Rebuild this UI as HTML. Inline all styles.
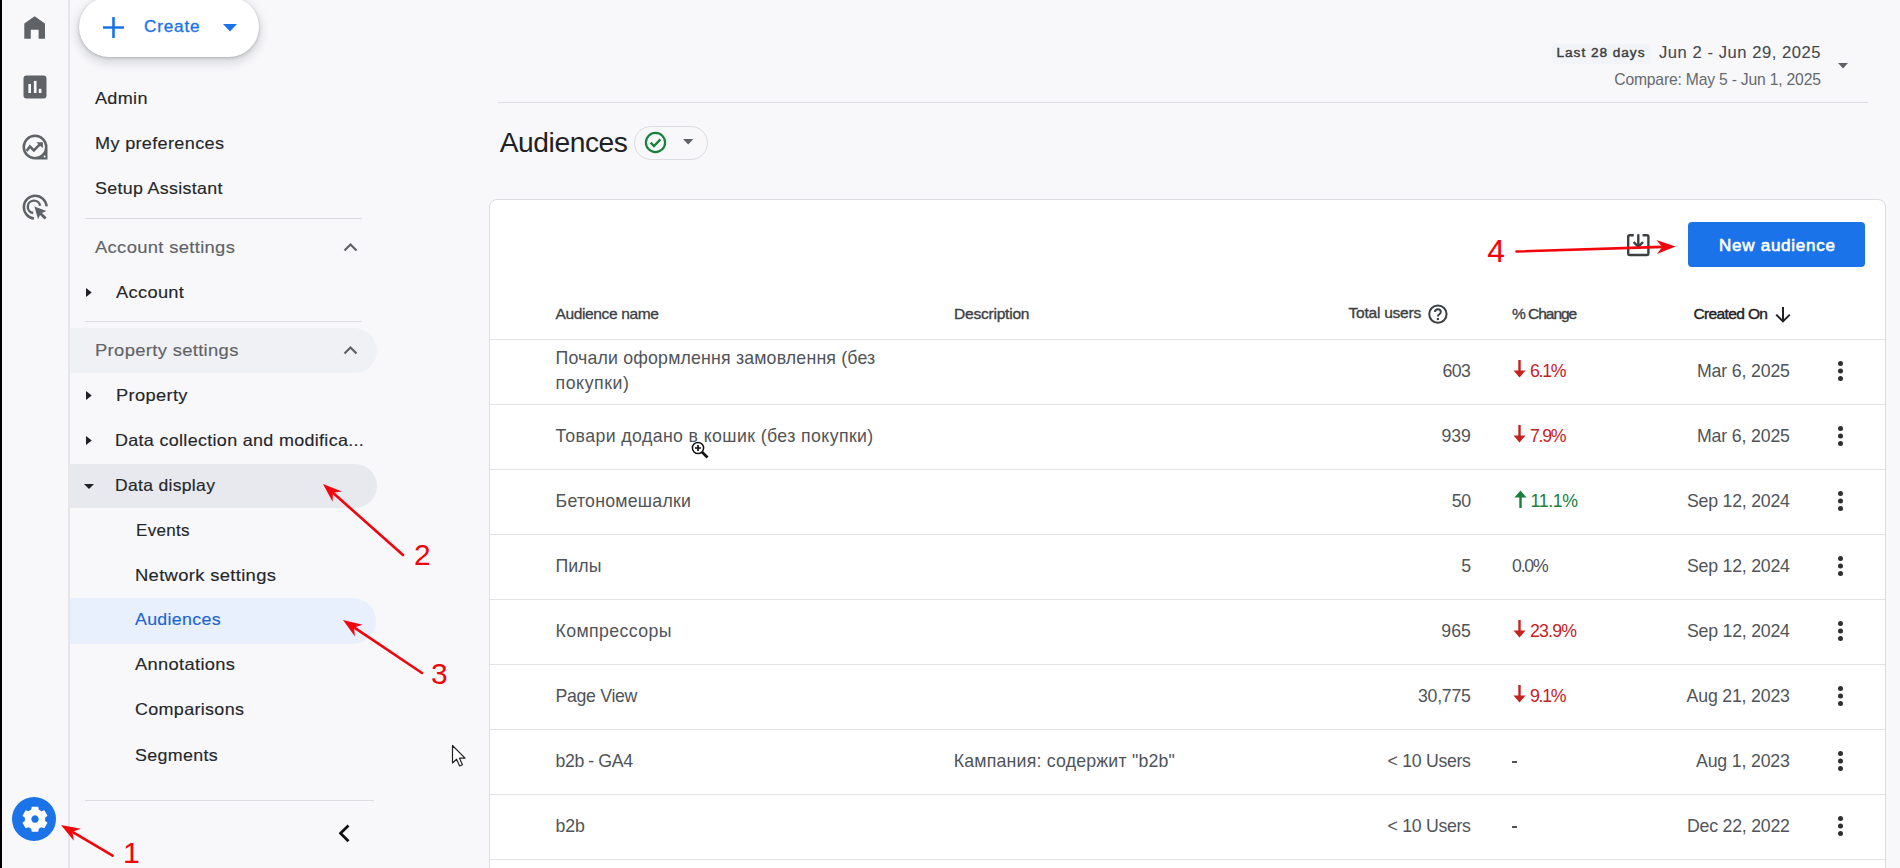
<!DOCTYPE html><html><head><meta charset="utf-8"><title>Audiences</title><style>
*{box-sizing:border-box}
html,body{margin:0;padding:0;width:1900px;height:868px;overflow:hidden;background:#f8f8fb;font-family:"Liberation Sans",sans-serif}
.t{position:absolute;white-space:nowrap}
.a{position:absolute}
.med{-webkit-text-stroke:0.35px currentColor}
</style></head><body>
<div class="a" style="left:0;top:0;width:2px;height:868px;background:#000"></div>
<div class="a" style="left:68px;top:0;width:1.5px;height:868px;background:#e5e5ea"></div>
<svg class="a" style="left:23px;top:15px" width="24" height="26" viewBox="0 0 24 26">
<path d="M11.65 1.3 L22 8.6 V23.7 H15.6 V14.7 H7.8 V23.7 H1.3 V8.6 Z" fill="#5f6368"/></svg>
<svg class="a" style="left:23px;top:75px" width="24" height="24" viewBox="0 0 24 24">
<rect x="0.5" y="0.5" width="23" height="23" rx="3" fill="#5f6368"/>
<rect x="5.4" y="9" width="2.6" height="9" fill="#fff"/>
<rect x="10.9" y="5.9" width="2.6" height="12.1" fill="#fff"/>
<rect x="15.8" y="13.8" width="2.6" height="4.2" fill="#fff"/></svg>
<svg class="a" style="left:22px;top:134px" width="26" height="26" viewBox="0 0 26 26">
<path fill-rule="evenodd" d="M25.5 13 A12.5 12.5 0 1 0 13 25.5 H25.5 Z M23 13 A10 10 0 1 0 3 13 A10 10 0 1 0 23 13 Z" fill="#5f6368"/>
<path d="M4.6 16.9 L7.9 12.5 L11.9 16.4 L17.8 10.4" fill="none" stroke="#5f6368" stroke-width="2.5" stroke-linejoin="miter"/>
<path d="M14.4 8.2 H20.9 V14.3 Z" fill="#5f6368"/>
<circle cx="22.6" cy="22.6" r="1" fill="#f8f8fb"/></svg>
<svg class="a" style="left:22px;top:194px" width="27" height="27" viewBox="0 0 27 27">
<path d="M12 24.5 A11.4 11.4 0 1 1 24.6 12.4" fill="none" stroke="#5f6368" stroke-width="2.5"/>
<path d="M11.2 19 A6.2 6.2 0 1 1 18.1 11.8" fill="none" stroke="#5f6368" stroke-width="2.4"/>
<path d="M12.4 12.4 L24.4 17 L20 18.9 L24.6 23.5 L22.6 25.5 L18 20.9 L16.1 25.3 Z" fill="#5f6368"/></svg>
<svg class="a" style="left:12px;top:797px" width="44" height="44" viewBox="0 0 44 44">
<circle cx="22" cy="22" r="22" fill="#1a73e8"/>
<g transform="translate(23 21.6) scale(0.95)">
<path fill="#fff" fill-rule="evenodd" d="M-3.4 -12.5 H3.4 L4 -9.2 A9.4 9.4 0 0 1 6.6 -7.7 L9.8 -8.8 L13.2 -3 L10.6 -0.8 A9.4 9.4 0 0 1 10.6 2.2 L13.2 4.4 L9.8 10.2 L6.6 9.1 A9.4 9.4 0 0 1 4 10.6 L3.4 13.9 H-3.4 L-4 10.6 A9.4 9.4 0 0 1 -6.6 9.1 L-9.8 10.2 L-13.2 4.4 L-10.6 2.2 A9.4 9.4 0 0 1 -10.6 -0.8 L-13.2 -3 L-9.8 -8.8 L-6.6 -7.7 A9.4 9.4 0 0 1 -4 -9.2 Z M0 -3.4 A3.9 3.9 0 1 0 0.001 -3.4 Z"/>
</g></svg>
<div class="a" style="left:78.5px;top:-3px;width:180px;height:59.5px;border-radius:30px;background:#fff;box-shadow:0 1px 3px rgba(60,64,67,.3),0 4px 8px 3px rgba(60,64,67,.15)"></div>
<svg class="a" style="left:103px;top:16.5px" width="21" height="21" viewBox="0 0 21 21"><path d="M10.5 0 V21 M0 10.5 H21" stroke="#1a73e8" stroke-width="2.6"/></svg>
<div class="t" style="left:144.00px;top:17.68px;font-size:17.15px;line-height:17.15px;letter-spacing:0.809px;color:#1a73e8;-webkit-text-stroke:0.35px currentColor;">Create</div>
<svg class="a" style="left:223px;top:23.5px" width="14" height="8" viewBox="0 0 14 8"><path d="M0 0 H14 L7 7.5 Z" fill="#1a73e8"/></svg>
<div class="a" style="left:70px;top:328px;width:307px;height:45px;border-radius:0 23px 23px 0;background:#f0f1f4"></div>
<div class="a" style="left:70px;top:464px;width:307px;height:44px;border-radius:0 22px 22px 0;background:#e8e9ee"></div>
<div class="a" style="left:70px;top:598px;width:306px;height:45.5px;border-radius:0 23px 23px 0;background:#e8f0fe"></div>
<div class="a" style="left:85px;top:217.5px;width:277px;height:1.5px;background:#dcdde2"></div>
<div class="a" style="left:85px;top:320.5px;width:277px;height:1.5px;background:#dcdde2"></div>
<div class="a" style="left:85px;top:799.5px;width:289px;height:1.5px;background:#dcdde2"></div>
<div class="t" style="left:95.00px;transform:scaleX(1.0805);transform-origin:0 0;top:90.75px;font-size:16.72px;line-height:16.72px;letter-spacing:0.300px;color:#25272a;-webkit-text-stroke:0.15px currentColor;">Admin</div>
<div class="t" style="left:95.00px;transform:scaleX(1.0834);transform-origin:0 0;top:135.85px;font-size:16.72px;line-height:16.72px;letter-spacing:0.300px;color:#25272a;-webkit-text-stroke:0.15px currentColor;">My preferences</div>
<div class="t" style="left:95.00px;transform:scaleX(1.0674);transform-origin:0 0;top:180.65px;font-size:16.72px;line-height:16.72px;letter-spacing:0.300px;color:#25272a;-webkit-text-stroke:0.15px currentColor;">Setup Assistant</div>
<div class="t" style="left:95.00px;transform:scaleX(1.1007);transform-origin:0 0;top:240.35px;font-size:16.72px;line-height:16.72px;letter-spacing:0.300px;color:#5f6368;-webkit-text-stroke:0.15px currentColor;">Account settings</div>
<div class="t" style="left:115.50px;transform:scaleX(1.0928);transform-origin:0 0;top:284.85px;font-size:16.72px;line-height:16.72px;letter-spacing:0.300px;color:#25272a;-webkit-text-stroke:0.15px currentColor;">Account</div>
<div class="t" style="left:95.00px;transform:scaleX(1.1017);transform-origin:0 0;top:343.35px;font-size:16.72px;line-height:16.72px;letter-spacing:0.300px;color:#5f6368;-webkit-text-stroke:0.15px currentColor;">Property settings</div>
<div class="t" style="left:115.50px;transform:scaleX(1.0952);transform-origin:0 0;top:387.85px;font-size:16.72px;line-height:16.72px;letter-spacing:0.300px;color:#25272a;-webkit-text-stroke:0.15px currentColor;">Property</div>
<div class="t" style="left:115.00px;transform:scaleX(1.0734);transform-origin:0 0;top:432.55px;font-size:16.72px;line-height:16.72px;letter-spacing:0.300px;color:#25272a;-webkit-text-stroke:0.15px currentColor;">Data collection and modifica...</div>
<div class="t" style="left:115.00px;transform:scaleX(1.0491);transform-origin:0 0;top:477.95px;font-size:16.72px;line-height:16.72px;letter-spacing:0.300px;color:#25272a;-webkit-text-stroke:0.15px currentColor;">Data display</div>
<div class="t" style="left:135.60px;transform:scaleX(1.0178);transform-origin:0 0;top:522.55px;font-size:16.72px;line-height:16.72px;letter-spacing:0.300px;color:#25272a;-webkit-text-stroke:0.15px currentColor;">Events</div>
<div class="t" style="left:135.40px;transform:scaleX(1.1013);transform-origin:0 0;top:567.75px;font-size:16.72px;line-height:16.72px;letter-spacing:0.300px;color:#25272a;-webkit-text-stroke:0.15px currentColor;">Network settings</div>
<div class="t" style="left:135.40px;transform:scaleX(1.0639);transform-origin:0 0;top:612.15px;font-size:16.72px;line-height:16.72px;letter-spacing:0.300px;color:#1b66d0;-webkit-text-stroke:0.15px currentColor;">Audiences</div>
<div class="t" style="left:135.00px;transform:scaleX(1.0958);transform-origin:0 0;top:657.35px;font-size:16.72px;line-height:16.72px;letter-spacing:0.300px;color:#25272a;-webkit-text-stroke:0.15px currentColor;">Annotations</div>
<div class="t" style="left:135.00px;transform:scaleX(1.0744);transform-origin:0 0;top:702.15px;font-size:16.72px;line-height:16.72px;letter-spacing:0.300px;color:#25272a;-webkit-text-stroke:0.15px currentColor;">Comparisons</div>
<div class="t" style="left:134.70px;transform:scaleX(1.0684);transform-origin:0 0;top:747.55px;font-size:16.72px;line-height:16.72px;letter-spacing:0.300px;color:#25272a;-webkit-text-stroke:0.15px currentColor;">Segments</div>
<svg class="a" style="left:342.8px;top:242.0px" width="15" height="10" viewBox="0 0 15 10"><path d="M1.5 8.5 L7.5 2.5 L13.5 8.5" fill="none" stroke="#5f6368" stroke-width="2.2"/></svg>
<svg class="a" style="left:342.8px;top:345.2px" width="15" height="10" viewBox="0 0 15 10"><path d="M1.5 8.5 L7.5 2.5 L13.5 8.5" fill="none" stroke="#5f6368" stroke-width="2.2"/></svg>
<svg class="a" style="left:86px;top:287.5px" width="7" height="9" viewBox="0 0 7 9"><path d="M0 0 L5.8 4.5 L0 9 Z" fill="#202124"/></svg>
<svg class="a" style="left:86px;top:391.3px" width="7" height="9" viewBox="0 0 7 9"><path d="M0 0 L5.8 4.5 L0 9 Z" fill="#202124"/></svg>
<svg class="a" style="left:86px;top:435.8px" width="7" height="9" viewBox="0 0 7 9"><path d="M0 0 L5.8 4.5 L0 9 Z" fill="#202124"/></svg>
<svg class="a" style="left:83.5px;top:483.5px" width="10" height="6" viewBox="0 0 10 6"><path d="M0 0 H10 L5 5 Z" fill="#202124"/></svg>
<svg class="a" style="left:336px;top:823px" width="16" height="21" viewBox="0 0 16 21"><path d="M12.5 2.5 L4.5 10.3 L12.5 18.2" fill="none" stroke="#111" stroke-width="2.7"/></svg>
<div class="a" style="left:498px;top:101.8px;width:1370px;height:1.5px;background:#dcdde2"></div>
<div class="a" style="left:1552px;top:44px;width:99px;height:20px;border-radius:4px;background:#f3f4f7"></div>
<div class="t" style="left:1556.50px;top:46.13px;font-size:13.66px;line-height:13.66px;letter-spacing:0.957px;color:#3c4043;-webkit-text-stroke:0.45px currentColor;">Last 28 days</div>
<div class="t" style="left:1659.00px;top:44.57px;font-size:16.57px;line-height:16.57px;letter-spacing:0.552px;color:#45484c;-webkit-text-stroke:0.1px currentColor;">Jun 2 - Jun 29, 2025</div>
<div class="t" style="left:1614.30px;top:72.21px;font-size:15.70px;line-height:15.70px;letter-spacing:-0.196px;color:#666a6e;">Compare: May 5 - Jun 1, 2025</div>
<svg class="a" style="left:1837.5px;top:62.5px" width="11" height="7" viewBox="0 0 11 7"><path d="M0 0 H10 L5 5.5 Z" fill="#5f6368"/></svg>
<div class="t" style="left:499.70px;top:128.12px;font-size:28.20px;line-height:28.20px;letter-spacing:-0.423px;color:#202124;">Audiences</div>
<div class="a" style="left:634px;top:125.5px;width:74px;height:34px;border-radius:17px;border:1.3px solid #dadce0"></div>
<svg class="a" style="left:643.5px;top:130.5px" width="23" height="23" viewBox="0 0 23 23"><circle cx="11.5" cy="11.5" r="9.6" fill="none" stroke="#188038" stroke-width="2.2"/><path d="M6.6 11.6 L10 15 L16.4 8.4" fill="none" stroke="#188038" stroke-width="2.3"/></svg>
<svg class="a" style="left:682.5px;top:139px" width="11" height="7" viewBox="0 0 11 7"><path d="M0 0 H10.4 L5.2 5.5 Z" fill="#5f6368"/></svg>
<div class="a" style="left:489px;top:199px;width:1397px;height:700px;border-radius:8px;border:1.3px solid #dadce0;background:#fff"></div>
<div class="a" style="left:1688px;top:222px;width:177px;height:45px;border-radius:4px;background:#1a73e8"></div>
<div class="t" style="left:1719.00px;top:237.00px;font-size:17.01px;line-height:17.01px;letter-spacing:0.744px;color:#fff;-webkit-text-stroke:0.6px currentColor;">New audience</div>
<svg class="a" style="left:1626px;top:232.5px" width="25" height="24" viewBox="0 0 25 24">
<path d="M7.8 2.2 H3.6 Q2.2 2.2 2.2 3.6 V20.6 Q2.2 22 3.6 22 H21 Q22.4 22 22.4 20.6 V3.6 Q22.4 2.2 21 2.2 H16.6" fill="none" stroke="#3c4043" stroke-width="2.4"/>
<path d="M12.3 1.2 V13.5 M7.6 9 L12.3 13.8 L17 9" fill="none" stroke="#3c4043" stroke-width="2.4"/></svg>
<div class="t" style="left:555.50px;top:306.33px;font-size:15.55px;line-height:15.55px;letter-spacing:-0.383px;color:#3c4043;-webkit-text-stroke:0.3px currentColor;">Audience name</div>
<div class="t" style="left:954.00px;top:306.33px;font-size:15.55px;line-height:15.55px;letter-spacing:-0.226px;color:#3c4043;-webkit-text-stroke:0.35px currentColor;">Description</div>
<div class="t" style="left:1348.50px;top:305.43px;font-size:15.55px;line-height:15.55px;letter-spacing:-0.250px;color:#3c4043;-webkit-text-stroke:0.35px currentColor;">Total users</div>
<div class="t" style="left:1511.90px;top:305.93px;font-size:15.55px;line-height:15.55px;letter-spacing:-1.033px;color:#3c4043;-webkit-text-stroke:0.35px currentColor;">% Change</div>
<div class="t" style="left:1693.50px;top:306.33px;font-size:15.55px;line-height:15.55px;letter-spacing:-0.656px;color:#202124;-webkit-text-stroke:0.4px currentColor;">Created On</div>
<svg class="a" style="left:1427px;top:303.5px" width="22" height="21" viewBox="0 0 22 21"><circle cx="10.9" cy="10.1" r="8.7" fill="none" stroke="#3c4043" stroke-width="2"/><path d="M8 8.1 Q8 5.3 10.9 5.3 Q13.8 5.3 13.8 7.9 Q13.8 9.4 12.2 10.3 Q10.9 11.1 10.9 12.6" fill="none" stroke="#3c4043" stroke-width="1.9"/><circle cx="10.9" cy="15" r="1.2" fill="#3c4043"/></svg>
<svg class="a" style="left:1774px;top:306px" width="18" height="17" viewBox="0 0 18 17"><path d="M9 1 V15.2 M2.2 8.6 L9 15.4 L15.8 8.6" fill="none" stroke="#202124" stroke-width="2"/></svg>
<div class="a" style="left:490px;top:338.5px;width:1395px;height:1.5px;background:#e3e3e6"></div>
<div class="a" style="left:490px;top:403.5px;width:1395px;height:1.5px;background:#e3e3e6"></div>
<div class="a" style="left:490px;top:468.5px;width:1395px;height:1.5px;background:#e3e3e6"></div>
<div class="a" style="left:490px;top:533.5px;width:1395px;height:1.5px;background:#e3e3e6"></div>
<div class="a" style="left:490px;top:598.5px;width:1395px;height:1.5px;background:#e3e3e6"></div>
<div class="a" style="left:490px;top:663.5px;width:1395px;height:1.5px;background:#e3e3e6"></div>
<div class="a" style="left:490px;top:728.5px;width:1395px;height:1.5px;background:#e3e3e6"></div>
<div class="a" style="left:490px;top:793.5px;width:1395px;height:1.5px;background:#e3e3e6"></div>
<div class="a" style="left:490px;top:858.5px;width:1395px;height:1.5px;background:#e3e3e6"></div>
<div class="t" style="left:555.50px;top:349.99px;font-size:17.73px;line-height:17.73px;letter-spacing:0.186px;color:#505458;">Почали оформлення замовлення (без</div>
<div class="t" style="left:555.50px;top:375.49px;font-size:17.73px;line-height:17.73px;letter-spacing:0.582px;color:#505458;">покупки)</div>
<div class="t" style="left:1442.50px;top:362.79px;font-size:17.73px;line-height:17.73px;letter-spacing:-0.557px;color:#505458;">603</div>
<div class="t" style="left:1530.00px;top:362.79px;font-size:17.73px;line-height:17.73px;letter-spacing:-1.310px;color:#c5221f;">6.1%</div>
<svg class="a" style="left:1512.5px;top:360.1px" width="13" height="18" viewBox="0 0 13 18"><path d="M6.5 0 V12" stroke="#c5221f" stroke-width="2.4"/><path d="M0.5 10.5 H12.5 L6.5 17.5 Z" fill="#c5221f"/></svg>
<div class="t" style="left:1697.00px;top:362.79px;font-size:17.73px;line-height:17.73px;letter-spacing:-0.160px;color:#505458;">Mar 6, 2025</div>
<svg class="a" style="left:1837px;top:360.0px" width="7" height="22" viewBox="0 0 7 22"><circle cx="3.5" cy="3.5" r="2.5" fill="#2d2f31"/><circle cx="3.5" cy="11" r="2.5" fill="#2d2f31"/><circle cx="3.5" cy="18.5" r="2.5" fill="#2d2f31"/></svg>
<div class="t" style="left:555.50px;top:427.79px;font-size:17.73px;line-height:17.73px;letter-spacing:0.395px;color:#505458;">Товари додано в кошик (без покупки)</div>
<div class="t" style="left:1441.50px;top:427.79px;font-size:17.73px;line-height:17.73px;letter-spacing:-0.057px;color:#505458;">939</div>
<div class="t" style="left:1530.00px;top:427.79px;font-size:17.73px;line-height:17.73px;letter-spacing:-1.310px;color:#c5221f;">7.9%</div>
<svg class="a" style="left:1512.5px;top:425.1px" width="13" height="18" viewBox="0 0 13 18"><path d="M6.5 0 V12" stroke="#c5221f" stroke-width="2.4"/><path d="M0.5 10.5 H12.5 L6.5 17.5 Z" fill="#c5221f"/></svg>
<div class="t" style="left:1697.00px;top:427.79px;font-size:17.73px;line-height:17.73px;letter-spacing:-0.160px;color:#505458;">Mar 6, 2025</div>
<svg class="a" style="left:1837px;top:425.0px" width="7" height="22" viewBox="0 0 7 22"><circle cx="3.5" cy="3.5" r="2.5" fill="#2d2f31"/><circle cx="3.5" cy="11" r="2.5" fill="#2d2f31"/><circle cx="3.5" cy="18.5" r="2.5" fill="#2d2f31"/></svg>
<div class="t" style="left:555.50px;top:492.79px;font-size:17.73px;line-height:17.73px;letter-spacing:0.253px;color:#505458;">Бетономешалки</div>
<div class="t" style="left:1451.70px;top:492.79px;font-size:17.73px;line-height:17.73px;letter-spacing:-0.383px;color:#505458;">50</div>
<div class="t" style="left:1530.50px;top:492.79px;font-size:17.73px;line-height:17.73px;letter-spacing:-0.361px;color:#188038;">11.1%</div>
<svg class="a" style="left:1513.5px;top:490.3px" width="13" height="18" viewBox="0 0 13 18"><path d="M6.5 18 V6" stroke="#188038" stroke-width="2.4"/><path d="M0.5 7.5 H12.5 L6.5 0.5 Z" fill="#188038"/></svg>
<div class="t" style="left:1687.00px;top:492.79px;font-size:17.73px;line-height:17.73px;letter-spacing:-0.228px;color:#505458;">Sep 12, 2024</div>
<svg class="a" style="left:1837px;top:490.0px" width="7" height="22" viewBox="0 0 7 22"><circle cx="3.5" cy="3.5" r="2.5" fill="#2d2f31"/><circle cx="3.5" cy="11" r="2.5" fill="#2d2f31"/><circle cx="3.5" cy="18.5" r="2.5" fill="#2d2f31"/></svg>
<div class="t" style="left:555.50px;top:557.79px;font-size:17.73px;line-height:17.73px;letter-spacing:0.083px;color:#505458;">Пилы</div>
<div class="t" style="left:1461.16px;top:557.79px;font-size:17.73px;line-height:17.73px;letter-spacing:0.000px;color:#505458;">5</div>
<div class="t" style="left:1512.00px;top:557.79px;font-size:17.73px;line-height:17.73px;letter-spacing:-1.210px;color:#505458;">0.0%</div>
<div class="t" style="left:1687.00px;top:557.79px;font-size:17.73px;line-height:17.73px;letter-spacing:-0.228px;color:#505458;">Sep 12, 2024</div>
<svg class="a" style="left:1837px;top:555.0px" width="7" height="22" viewBox="0 0 7 22"><circle cx="3.5" cy="3.5" r="2.5" fill="#2d2f31"/><circle cx="3.5" cy="11" r="2.5" fill="#2d2f31"/><circle cx="3.5" cy="18.5" r="2.5" fill="#2d2f31"/></svg>
<div class="t" style="left:555.50px;top:622.79px;font-size:17.73px;line-height:17.73px;letter-spacing:0.393px;color:#505458;">Компрессоры</div>
<div class="t" style="left:1441.30px;top:622.79px;font-size:17.73px;line-height:17.73px;letter-spacing:0.043px;color:#505458;">965</div>
<div class="t" style="left:1530.00px;top:622.79px;font-size:17.73px;line-height:17.73px;letter-spacing:-0.818px;color:#c5221f;">23.9%</div>
<svg class="a" style="left:1512.5px;top:620.1px" width="13" height="18" viewBox="0 0 13 18"><path d="M6.5 0 V12" stroke="#c5221f" stroke-width="2.4"/><path d="M0.5 10.5 H12.5 L6.5 17.5 Z" fill="#c5221f"/></svg>
<div class="t" style="left:1687.00px;top:622.79px;font-size:17.73px;line-height:17.73px;letter-spacing:-0.228px;color:#505458;">Sep 12, 2024</div>
<svg class="a" style="left:1837px;top:620.0px" width="7" height="22" viewBox="0 0 7 22"><circle cx="3.5" cy="3.5" r="2.5" fill="#2d2f31"/><circle cx="3.5" cy="11" r="2.5" fill="#2d2f31"/><circle cx="3.5" cy="18.5" r="2.5" fill="#2d2f31"/></svg>
<div class="t" style="left:555.50px;top:687.79px;font-size:17.73px;line-height:17.73px;letter-spacing:-0.312px;color:#505458;">Page View</div>
<div class="t" style="left:1418.00px;top:687.79px;font-size:17.73px;line-height:17.73px;letter-spacing:-0.253px;color:#505458;">30,775</div>
<div class="t" style="left:1530.00px;top:687.79px;font-size:17.73px;line-height:17.73px;letter-spacing:-1.310px;color:#c5221f;">9.1%</div>
<svg class="a" style="left:1512.5px;top:685.1px" width="13" height="18" viewBox="0 0 13 18"><path d="M6.5 0 V12" stroke="#c5221f" stroke-width="2.4"/><path d="M0.5 10.5 H12.5 L6.5 17.5 Z" fill="#c5221f"/></svg>
<div class="t" style="left:1686.60px;top:687.79px;font-size:17.73px;line-height:17.73px;letter-spacing:-0.192px;color:#505458;">Aug 21, 2023</div>
<svg class="a" style="left:1837px;top:685.0px" width="7" height="22" viewBox="0 0 7 22"><circle cx="3.5" cy="3.5" r="2.5" fill="#2d2f31"/><circle cx="3.5" cy="11" r="2.5" fill="#2d2f31"/><circle cx="3.5" cy="18.5" r="2.5" fill="#2d2f31"/></svg>
<div class="t" style="left:555.50px;top:752.79px;font-size:17.73px;line-height:17.73px;letter-spacing:-0.408px;color:#505458;">b2b - GA4</div>
<div class="t" style="left:953.70px;top:752.79px;font-size:17.73px;line-height:17.73px;letter-spacing:0.208px;color:#505458;">Кампания: содержит "b2b"</div>
<div class="t" style="left:1387.60px;top:752.79px;font-size:17.73px;line-height:17.73px;letter-spacing:-0.319px;color:#505458;">&lt; 10 Users</div>
<div class="a" style="left:1511.5px;top:761.2px;width:5px;height:1.6px;background:#505458"></div>
<div class="t" style="left:1696.00px;top:752.79px;font-size:17.73px;line-height:17.73px;letter-spacing:-0.167px;color:#505458;">Aug 1, 2023</div>
<svg class="a" style="left:1837px;top:750.0px" width="7" height="22" viewBox="0 0 7 22"><circle cx="3.5" cy="3.5" r="2.5" fill="#2d2f31"/><circle cx="3.5" cy="11" r="2.5" fill="#2d2f31"/><circle cx="3.5" cy="18.5" r="2.5" fill="#2d2f31"/></svg>
<div class="t" style="left:555.50px;top:817.79px;font-size:17.73px;line-height:17.73px;letter-spacing:-0.057px;color:#505458;">b2b</div>
<div class="t" style="left:1387.60px;top:817.79px;font-size:17.73px;line-height:17.73px;letter-spacing:-0.319px;color:#505458;">&lt; 10 Users</div>
<div class="a" style="left:1511.5px;top:826.2px;width:5px;height:1.6px;background:#505458"></div>
<div class="t" style="left:1687.00px;top:817.79px;font-size:17.73px;line-height:17.73px;letter-spacing:-0.228px;color:#505458;">Dec 22, 2022</div>
<svg class="a" style="left:1837px;top:815.0px" width="7" height="22" viewBox="0 0 7 22"><circle cx="3.5" cy="3.5" r="2.5" fill="#2d2f31"/><circle cx="3.5" cy="11" r="2.5" fill="#2d2f31"/><circle cx="3.5" cy="18.5" r="2.5" fill="#2d2f31"/></svg>
<svg class="a" style="left:0;top:0" width="1900" height="868" viewBox="0 0 1900 868"><path d="M112.6 855.6 L72.4 831.8" stroke="#f2060c" stroke-width="2.6" stroke-linecap="round"/><path d="M61.0 825.0 L80.9 828.7 L72.4 831.8 L73.8 840.7 Z" fill="#f2060c"/><path d="M403.0 555.0 L332.9 492.8" stroke="#f2060c" stroke-width="2.6" stroke-linecap="round"/><path d="M323.0 484.0 L341.9 491.4 L332.9 492.8 L332.6 501.8 Z" fill="#f2060c"/><path d="M422.0 673.0 L354.0 627.4" stroke="#f2060c" stroke-width="2.6" stroke-linecap="round"/><path d="M343.0 620.0 L362.7 624.8 L354.0 627.4 L354.9 636.4 Z" fill="#f2060c"/><path d="M1516.5 251.5 L1662.3 246.9" stroke="#f2060c" stroke-width="2.6" stroke-linecap="round"/><path d="M1675.6 246.5 L1656.8 254.1 L1662.3 246.9 L1656.4 240.1 Z" fill="#f2060c"/></svg>
<div class="t" style="left:123.00px;top:837.83px;font-size:30.31px;line-height:30.31px;letter-spacing:0.000px;color:#f2060c;">1</div>
<div class="t" style="left:414.00px;top:540.29px;font-size:29.89px;line-height:29.89px;letter-spacing:0.000px;color:#f2060c;">2</div>
<div class="t" style="left:431.00px;top:658.69px;font-size:29.89px;line-height:29.89px;letter-spacing:0.000px;color:#f2060c;">3</div>
<div class="t" style="left:1487.20px;top:236.12px;font-size:31.86px;line-height:31.86px;letter-spacing:0.000px;color:#f2060c;">4</div>
<svg class="a" style="left:451px;top:744px" width="18" height="24" viewBox="0 0 18 24">
<path d="M1.5 1.5 V19 L5.6 15.2 L8.6 22 L11.4 20.8 L8.5 14.2 H14 Z" fill="#fff" stroke="#222" stroke-width="1.2" stroke-linejoin="round"/></svg>
<svg class="a" style="left:690px;top:440px" width="20" height="20" viewBox="0 0 20 20">
<circle cx="8" cy="8" r="5.6" fill="#fff" stroke="#111" stroke-width="1.5"/>
<path d="M8 5 V11 M5 8 H11" stroke="#111" stroke-width="1.7"/>
<path d="M12 12 L17.5 17.5" stroke="#111" stroke-width="2.6"/></svg>
</body></html>
